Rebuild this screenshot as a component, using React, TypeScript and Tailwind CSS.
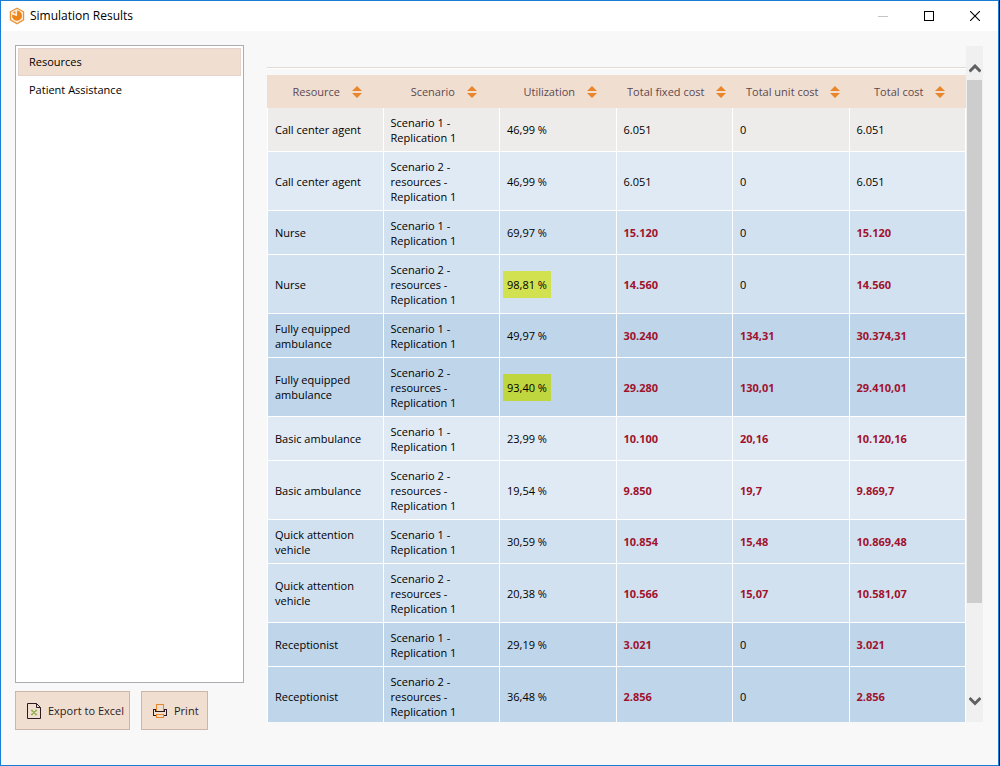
import React, { useState } from 'react'

type ResultRow = {
  resource: string;
  scenario: number;
  utilization: string;
  fixed: string;
  unit: string;
  total: string;
  tone: string;
  mark?: string;
}

const LIGHT = 'bg-[#e0eaf4]';
const MEDIUM = 'bg-[#d2e1f0]';
const DARK = 'bg-[#bfd5ea]';

const rows: ResultRow[] = [
  { resource: 'Call center agent', scenario: 1, utilization: '46,99 %', fixed: '6.051', unit: '0', total: '6.051', tone: 'bg-[#edecea]' },
  { resource: 'Call center agent', scenario: 2, utilization: '46,99 %', fixed: '6.051', unit: '0', total: '6.051', tone: LIGHT },
  { resource: 'Nurse', scenario: 1, utilization: '69,97 %', fixed: '15.120', unit: '0', total: '15.120', tone: MEDIUM },
  { resource: 'Nurse', scenario: 2, utilization: '98,81 %', fixed: '14.560', unit: '0', total: '14.560', tone: MEDIUM, mark: 'bg-[#d2e14f]' },
  { resource: 'Fully equipped ambulance', scenario: 1, utilization: '49,97 %', fixed: '30.240', unit: '134,31', total: '30.374,31', tone: DARK },
  { resource: 'Fully equipped ambulance', scenario: 2, utilization: '93,40 %', fixed: '29.280', unit: '130,01', total: '29.410,01', tone: DARK, mark: 'bg-[#bfd63f]' },
  { resource: 'Basic ambulance', scenario: 1, utilization: '23,99 %', fixed: '10.100', unit: '20,16', total: '10.120,16', tone: LIGHT },
  { resource: 'Basic ambulance', scenario: 2, utilization: '19,54 %', fixed: '9.850', unit: '19,7', total: '9.869,7', tone: LIGHT },
  { resource: 'Quick attention vehicle', scenario: 1, utilization: '30,59 %', fixed: '10.854', unit: '15,48', total: '10.869,48', tone: MEDIUM },
  { resource: 'Quick attention vehicle', scenario: 2, utilization: '20,38 %', fixed: '10.566', unit: '15,07', total: '10.581,07', tone: MEDIUM },
  { resource: 'Receptionist', scenario: 1, utilization: '29,19 %', fixed: '3.021', unit: '0', total: '3.021', tone: DARK },
  { resource: 'Receptionist', scenario: 2, utilization: '36,48 %', fixed: '2.856', unit: '0', total: '2.856', tone: DARK },
];

const columns = ['Resource', 'Scenario', 'Utilization', 'Total fixed cost', 'Total unit cost', 'Total cost'];
const sections = ['Resources', 'Patient Assistance'];

const TitleBar = () => (
  <header className="flex h-[30px] shrink-0 items-center bg-white pl-2">
    <svg width="16" height="18" viewBox="0 0 16 18" className="shrink-0">
      <path d="M8 1.2 14.6 4.8V12.8L8 16.8 1.4 12.8V4.8Z" fill="#fdebd6" stroke="#e9913a" strokeWidth="1.2" />
      <path d="M8.2 3.6A5.2 5.2 0 0 1 13 8.8 5 5 0 0 1 8 13.8 5 5 0 0 1 3.2 7.6L8 9.2Z" fill="#ee8318" />
      <path d="M4 5.6 6.4 4V7Z" fill="#ee8318" />
    </svg>
    <h1 className="ml-[5px] flex-1 text-[12px] leading-4 text-black">Simulation Results</h1>
    <button aria-label="Minimize" className="flex h-full w-[46px] items-center justify-center">
      <svg width="10" height="10" shapeRendering="crispEdges"><path d="M0 5.5H10" stroke="#c4c4c4" /></svg>
    </button>
    <button aria-label="Maximize" className="flex h-full w-[46px] items-center justify-center">
      <svg width="10" height="10" shapeRendering="crispEdges"><path d="M.5 .5H9.5V9.5H.5Z" fill="none" stroke="#000" /></svg>
    </button>
    <button aria-label="Close" className="flex h-full w-[46px] items-center justify-center">
      <svg width="10" height="10"><path d="M0 0 10 10M10 0 0 10" stroke="#000" strokeWidth="1.1" /></svg>
    </button>
  </header>
);

const SortIcon = () => (
  <svg width="10" height="12" viewBox="0 0 10 12" className="shrink-0" fill="#e9862c">
    <path d="M5 0 10 5H0ZM0 7H10L5 12Z" />
  </svg>
);

const ExcelIcon = () => (
  <svg width="14" height="16" viewBox="0 0 14 16" fill="none" className="shrink-0">
    <path d="M.5 .5H9.5L13.5 4.5V15.5H.5Z" stroke="#2b1a1f" />
    <path d="M9.5 .5V4.5H13.5" stroke="#2b1a1f" />
    <path d="M4 7.5H6M8 7.5H10M4 11.5H6M8 11.5H10M5 7.5 9 11.5M9 7.5 5 11.5" stroke="#8fb04a" strokeWidth="1.3" />
  </svg>
);

const PrintIcon = () => (
  <svg width="14" height="14" viewBox="0 0 14 14" fill="none" shapeRendering="crispEdges" className="shrink-0">
    <path d="M3.5 7V.5H10.5V7" stroke="#e9862c" />
    <path d="M3 11.5H.5V5.5H2.5V7.5H11.5V5.5H13.5V11.5H11" stroke="#2b1a1f" />
    <path d="M3.5 10.5H10.5V13.5H3.5Z" stroke="#e9862c" />
  </svg>
);

const ScrollBar = () => (
  <div className="flex w-[17px] shrink-0 flex-col items-center bg-[#f0f0f0] pt-3 pb-[15px]">
    <button aria-label="Scroll up" className="flex h-[22px] w-full items-center justify-center">
      <svg width="12" height="10" viewBox="0 0 12 10"><path d="M.5 7.5 6 2 11.5 7.5" fill="none" stroke="#606060" strokeWidth="3" /></svg>
    </button>
    <div className="flex w-full flex-1 justify-center">
      <div className="h-[85%] w-[15px] bg-[#cdcdcd]" />
    </div>
    <button aria-label="Scroll down" className="flex h-3 w-full items-center justify-center">
      <svg width="12" height="10" viewBox="0 0 12 10"><path d="M.5 2 6 7.5 11.5 2" fill="none" stroke="#606060" strokeWidth="3" /></svg>
    </button>
  </div>
);

const Cost = ({ value, plain }: { value: string, plain: boolean }) => (
  <td className={`border-r border-b border-white px-[7px] ${plain ? '' : 'font-bold text-[#a0122d]'}`}>{value}</td>
);

const ResultsTable = () => (
  <table className="w-full table-fixed border-separate border-spacing-0 text-left text-[11px] leading-[15px] text-black">
    <thead>
      <tr className="h-[33px] bg-[#f0dfd0] text-[#5c4850]">
        {columns.map((column) => (
          <th key={column} className="p-0 font-normal">
            <button className="flex w-full items-center justify-center gap-3 pl-1 whitespace-nowrap">
              {column}
              <SortIcon />
            </button>
          </th>
        ))}
      </tr>
    </thead>
    <tbody>
      {rows.map((row, index) => (
        <tr key={index} className={row.tone}>
          <td className="border-x border-b border-white px-[7px]">{row.resource}</td>
          <td className="border-r border-b border-white px-[7px] pt-[7px] pb-[6px]">
            {row.scenario === 1 ? 'Scenario 1 - Replication 1' : 'Scenario 2 - resources - Replication 1'}
          </td>
          <td className="border-r border-b border-white px-[3px]">
            <span className={`inline-block px-1 py-[6px] align-middle ${row.mark || ''}`}>{row.utilization}</span>
          </td>
          <Cost value={row.fixed} plain={row.fixed === '6.051'} />
          <Cost value={row.unit} plain={row.unit === '0'} />
          <Cost value={row.total} plain={row.total === '6.051'} />
        </tr>
      ))}
    </tbody>
  </table>
);

const App = () => {
  const [section, setSection] = useState('Resources');

  return (
    <div className="h-screen bg-[#1b1b1b] pr-px font-['Open_Sans','Noto_Sans',sans-serif]">
      <div className="flex h-full flex-col border border-[#1a7fd4] bg-[#f8f8f8]">
        <TitleBar />
        <div className="flex min-h-0 flex-1 gap-[23px] pl-[14px] pr-[15px]">
          <aside className="flex w-[229px] shrink-0 flex-col pt-[14px] pb-[35px]">
            <nav className="flex flex-1 flex-col border border-[#abadb3] bg-white p-0.5 text-[11px] leading-[15px]">
              {sections.map((item) => (
                <button
                  key={item}
                  onClick={() => setSection(item)}
                  className={`h-7 border px-[10px] pb-px text-left ${item === section ? 'border-[#e3d3ca] bg-[#f0dfd0]' : 'border-transparent'}`}
                >
                  {item}
                </button>
              ))}
            </nav>
            <div className="mt-2 flex gap-[11px] text-[11px] leading-[15px] whitespace-nowrap text-[#2b1a1f]">
              <button className="flex h-[39px] w-[115px] items-center gap-[7px] border border-[#cdb5a8] bg-[#f0dfd0] pl-[11px]">
                <ExcelIcon />
                Export to Excel
              </button>
              <button className="flex h-[39px] w-[67px] items-center gap-[7px] border border-[#cdb5a8] bg-[#f0dfd0] pl-[11px]">
                <PrintIcon />
                Print
              </button>
            </div>
          </aside>
          <main className="flex min-w-0 flex-1 pt-[15px] pb-[43px]">
            <div className="min-w-0 flex-1 overflow-hidden pt-[21px]">
              <div className="mb-[6px] h-0.5 border-t border-[#e0dad0] bg-white" />
              <ResultsTable />
            </div>
            <ScrollBar />
          </main>
        </div>
      </div>
    </div>
  );
}

export default App
